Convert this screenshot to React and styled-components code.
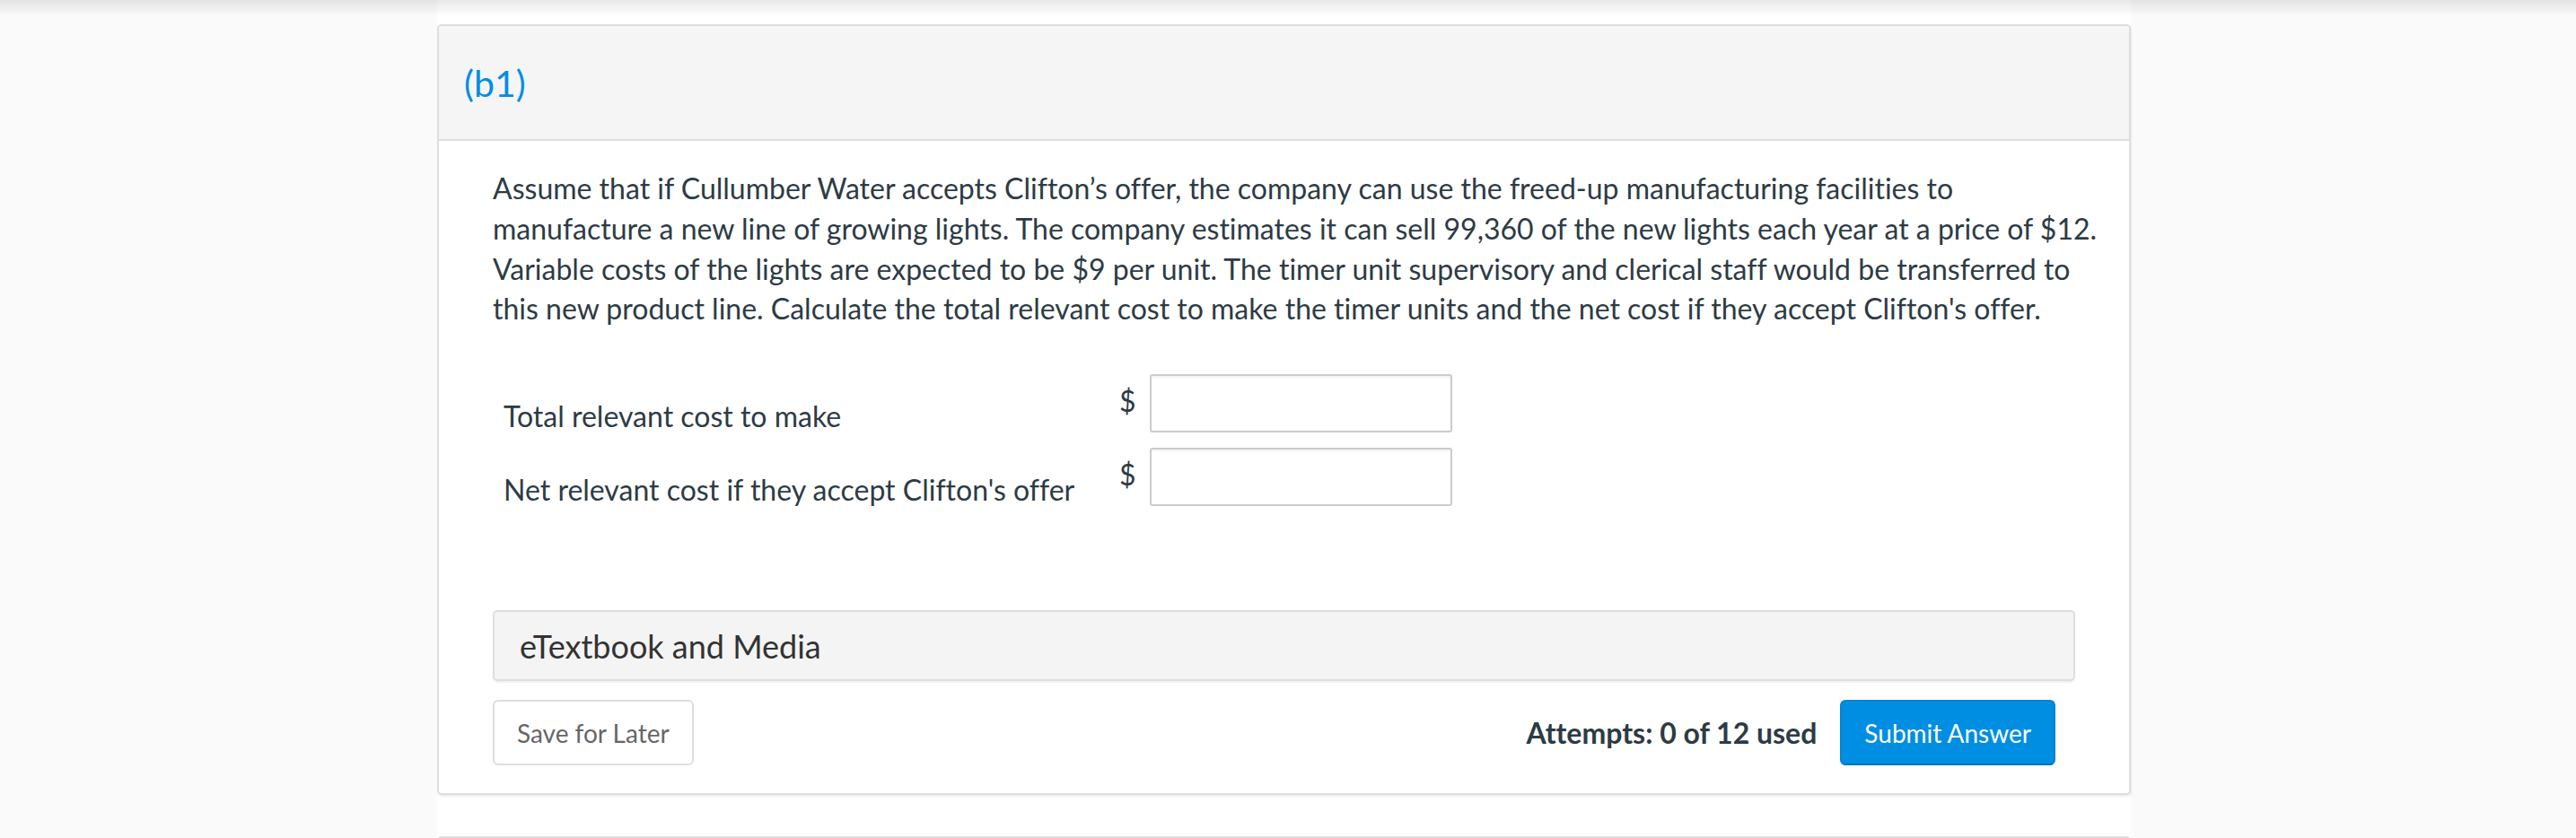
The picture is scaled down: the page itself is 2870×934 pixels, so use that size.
import React from "react";
import styled, { createGlobalStyle } from "styled-components";

const Global = createGlobalStyle`
  html, body { margin: 0; padding: 0; }
  body {
    background: #fafafa;
    font-family: Lato, "Open Sans", "Liberation Sans", sans-serif;
    color: #2d3b45;
    -webkit-font-smoothing: antialiased;
    font-variant-ligatures: none;
  }
  * { box-sizing: border-box; }
`;

const TopShadow = styled.div`
  position: fixed;
  top: 0;
  left: 0;
  right: 0;
  height: 18px;
  background: linear-gradient(rgba(0, 0, 0, 0.09), rgba(0, 0, 0, 0));
  pointer-events: none;
`;

const Page = styled.div`
  display: flex;
  padding-left: 487px;
  min-height: 934px;
`;

const Column = styled.main`
  width: 1887px;
  background: #ffffff;
  padding-top: 27px;
  display: flex;
  flex-direction: column;
  gap: 46px;
`;

const Panel = styled.section`
  border: 2px solid #dedede;
  border-radius: 5px;
  background: #fff;
  box-shadow: 1px 2px 2px rgba(0, 0, 0, 0.07);
  overflow: hidden;
  min-height: ${(p) => p.$minHeight || 0}px;
`;

const PanelHeader = styled.header`
  height: 128px;
  background: #f5f5f5;
  border-bottom: 2px solid #dedede;
  display: flex;
  align-items: center;
  padding-left: 28px;
`;

const PartTitle = styled.h2`
  margin: 0;
  font-weight: 400;
  font-size: 41px;
  line-height: 48px;
  color: #008ee2;
  padding-top: 2px;
`;

const PanelBody = styled.div`
  padding: 31px 60px 31px 60px;
`;

const Question = styled.p`
  margin: 0;
  font-size: 32px;
  line-height: 44.8px;
  color: #2d3b45;
`;

const Line = styled.span`
  display: block;
  white-space: nowrap;
`;

const AnswerTable = styled.div`
  margin-top: 50px;
  display: grid;
  grid-template-columns: 686px 34px 337px;
  row-gap: 17px;
  padding-left: 12px;
`;

const Label = styled.div`
  align-self: end;
  font-size: 32px;
  line-height: 32px;
  padding-bottom: 2px;
  color: #2d3b45;
  white-space: nowrap;
`;

const Dollar = styled.div`
  align-self: start;
  margin-top: 14px;
  font-size: 32px;
  line-height: 32px;
  color: #2d3b45;
`;

const AmountInput = styled.input`
  width: 337px;
  height: 65px;
  border: 2px solid #cccccc;
  border-radius: 3px;
  box-shadow: inset 0 2px 2px rgba(0, 0, 0, 0.05);
  background: #fff;
  font-family: inherit;
  font-size: 28px;
  padding: 0 12px;
  outline: none;
`;

const MediaBar = styled.div`
  margin-top: 116px;
  height: 79px;
  background: #f4f4f4;
  border: 2px solid #dedede;
  border-radius: 5px;
  box-shadow: 0 2px 2px rgba(0, 0, 0, 0.06);
  display: flex;
  align-items: center;
  padding-left: 28px;
  font-size: 36px;
  color: #333;
`;

const ActionRow = styled.div`
  margin-top: 21px;
  display: flex;
  align-items: center;
  justify-content: space-between;
  padding-right: 22px;
`;

const RightGroup = styled.div`
  display: flex;
  align-items: center;
  gap: 26px;
`;

const Button = styled.button`
  height: 73px;
  border-radius: 6px;
  font-family: inherit;
  font-size: 28px;
  padding: 0 25px;
  cursor: pointer;
  border: 2px solid ${(p) => (p.$primary ? "#0084d4" : "#dedede")};
  border-bottom-color: ${(p) => (p.$primary ? "#0074bb" : "#dedede")};
  background: ${(p) => (p.$primary ? "#008ee2" : "#ffffff")};
  color: ${(p) => (p.$primary ? "#ffffff" : "#666666")};
`;

const Attempts = styled.span`
  font-weight: 700;
  font-size: 32px;
  color: #2d3b45;
`;

export default function App() {
  return (
    <>
      <Global />
      <TopShadow />
      <Page>
        <Column>
          <Panel>
            <PanelHeader>
              <PartTitle>(b1)</PartTitle>
            </PanelHeader>
            <PanelBody>
              <Question>
                <Line>
                  Assume that if Cullumber Water accepts Clifton’s offer, the company can use the freed-up manufacturing facilities to
                </Line>
                <Line>
                  manufacture a new line of growing lights. The company estimates it can sell 99,360 of the new lights each year at a price of $12.
                </Line>
                <Line>
                  Variable costs of the lights are expected to be $9 per unit. The timer unit supervisory and clerical staff would be transferred to
                </Line>
                <Line>
                  this new product line. Calculate the total relevant cost to make the timer units and the net cost if they accept Clifton's offer.
                </Line>
              </Question>
              <AnswerTable>
                <Label>Total relevant cost to make</Label>
                <Dollar>$</Dollar>
                <AmountInput type="text" aria-label="Total relevant cost to make" />
                <Label>Net relevant cost if they accept Clifton's offer</Label>
                <Dollar>$</Dollar>
                <AmountInput type="text" aria-label="Net relevant cost if they accept Clifton's offer" />
              </AnswerTable>
              <MediaBar>eTextbook and Media</MediaBar>
              <ActionRow>
                <Button>Save for Later</Button>
                <RightGroup>
                  <Attempts>Attempts: 0 of 12 used</Attempts>
                  <Button $primary>Submit Answer</Button>
                </RightGroup>
              </ActionRow>
            </PanelBody>
          </Panel>
          <Panel $minHeight={200} />
        </Column>
      </Page>
    </>
  );
}
